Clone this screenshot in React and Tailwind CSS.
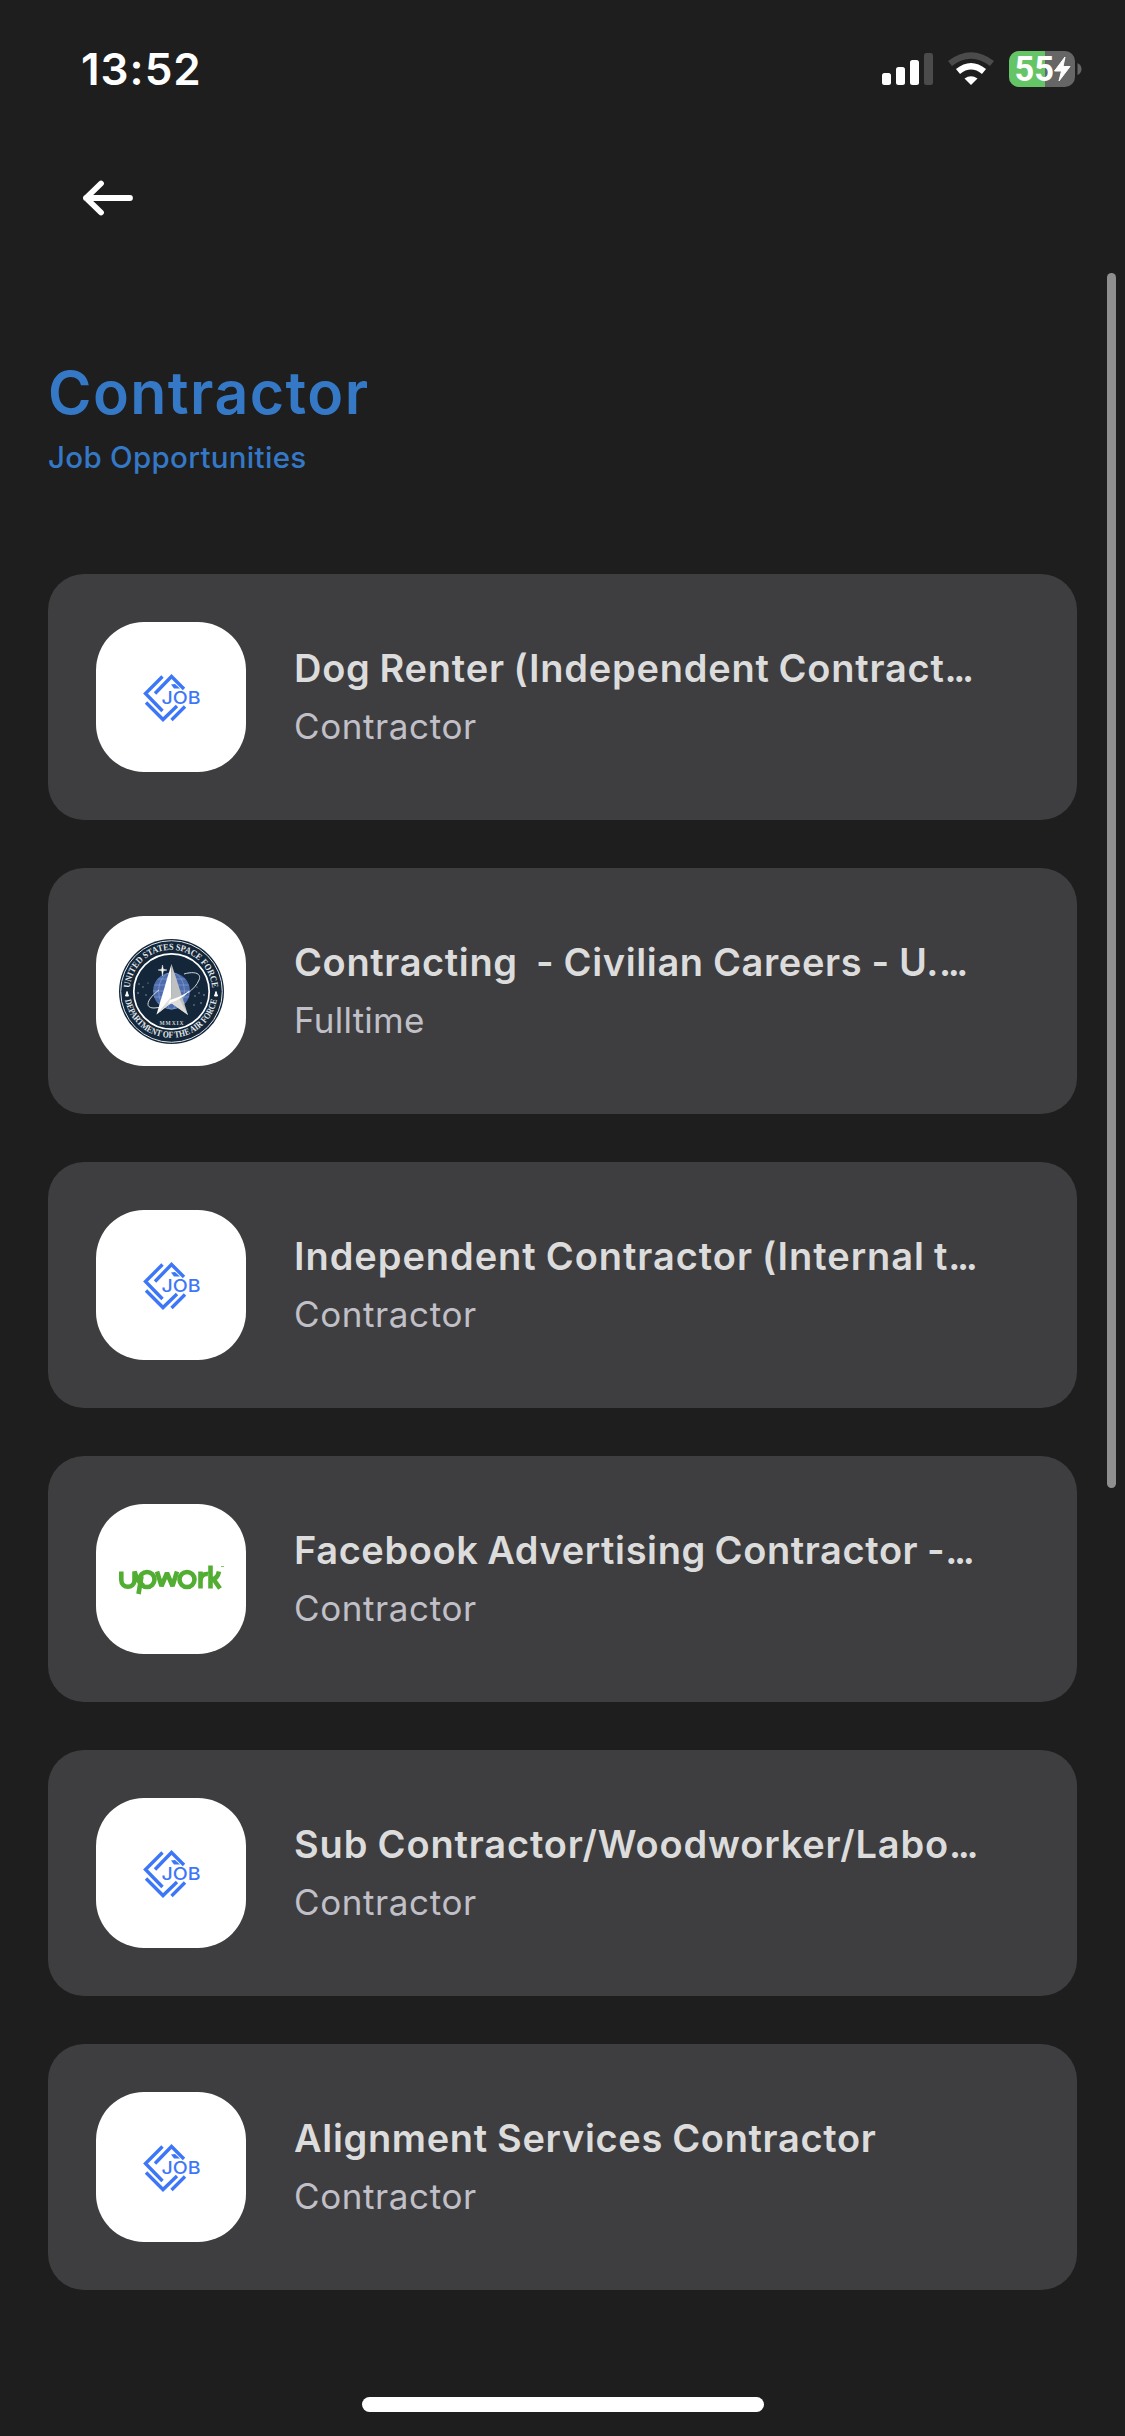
const jobs = [
  { title: "Dog Renter (Independent Contract", cut: true, type: "Contractor", logo: "job", fit: "tracking-[0.77px] [word-spacing:-1.5px]" },
  { title: "Contracting  - Civilian Careers - U.", cut: true, type: "Fulltime", logo: "space", fit: "tracking-[0.62px] [word-spacing:-1px]" },
  { title: "Independent Contractor (Internal t", cut: true, type: "Contractor", logo: "job", fit: "tracking-[0.95px] [word-spacing:-1.5px]" },
  { title: "Facebook Advertising Contractor -", cut: true, type: "Contractor", logo: "upwork", fit: "tracking-[0.6px] [word-spacing:-1.5px]" },
  { title: "Sub Contractor/Woodworker/Labo", cut: true, type: "Contractor", logo: "job", fit: "tracking-[0.83px] [word-spacing:-1px]" },
  { title: "Alignment Services Contractor", cut: false, type: "Contractor", logo: "job", fit: "tracking-[0.66px] [word-spacing:-1px]" },
];

function JobLogo() {
  return (
    <svg viewBox="0 0 150 150" className="size-full" fill="none" stroke="#3d77f8" strokeWidth="3.4">
      <path d="M66.5 54.5 49.5 71.5 66.5 89" />
      <path d="M59 71.5 75.5 54.5 88 67" />
      <path d="M50 80.5 67 97.5 81 84" />
      <path d="M75.500 98 89 84.500" />
      <path d="M75 62.500 79 62 84 66.500H78z" fill="#3d77f8" stroke="none" />
      <text x="65.500" y="82" fontFamily="Inter" fontSize="17.300" fontWeight="500" textLength="39" lengthAdjust="spacingAndGlyphs" fill="#3d77f8" stroke="none">JOB</text>
    </svg>
  );
}

function SpaceLogo() {
  return (
    <svg viewBox="0 0 150 150" className="size-full">
      <defs>
        <path id="sealTop" d="M33.800 75a41.200 41.200 0 0 1 82.400 0" />
        <path id="sealBottom" d="M28.200 75a46.800 46.800 0 0 0 93.600 0" />
        <clipPath id="globe"><circle cx="75.500" cy="75" r="18.500" /></clipPath>
      </defs>
      <circle cx="75.500" cy="75.500" r="52.500" fill="#14273a" />
      <circle cx="75.500" cy="75.500" r="50.800" fill="none" stroke="#dfe3e6" strokeWidth="1" />
      <circle cx="75.500" cy="75.500" r="37.700" fill="none" stroke="#fff" strokeWidth="1.700" />
      <g fill="#e4e7ea" fontFamily="Liberation Serif" fontSize="9.200" fontWeight="700">
        <text><textPath href="#sealTop" startOffset="3" textLength="123" lengthAdjust="spacingAndGlyphs">UNITED STATES SPACE FORCE</textPath></text>
        <text><textPath href="#sealBottom" startOffset="9" textLength="129" lengthAdjust="spacingAndGlyphs">DEPARTMENT OF THE AIR FORCE</textPath></text>
      </g>
      <path d="M31 75.500 32.500 80H29.500zM120 75.500 121.500 80H118.500z" fill="#fff" stroke="#fff" />
      <circle cx="75.500" cy="75" r="18.500" fill="#4d6cad" />
      <g clipPath="url(#globe)" fill="none" stroke="#8fa6d3" strokeWidth=".6">
        <ellipse cx="75.500" cy="75" rx="6" ry="18.500" />
        <ellipse cx="75.500" cy="75" rx="13" ry="18.500" />
        <path d="M57 63h37M57 69h37M57 75h37M57 81h37M57 87h37" />
      </g>
      <path d="M88 58c10-3 18-1 15 6-2 5-6 9-11 13M63 74c-12 9-15 18-5 18 10 0 27-8 35-17" fill="none" stroke="#d3d9e0" strokeWidth="1" />
      <path d="M75.500 48 60.500 98.500 75 87z" fill="#fff" />
      <path d="M75.500 48 92 99 75 87z" fill="#bfc1c0" />
      <path d="M60.500 98.500 75 81v6z" fill="#dcdcd9" />
      <path d="M75 87 92 99 83 82z" fill="#dcdcd9" />
      <path d="M72 88c8-3 16-7 21-13-5 4-12 7-19 9z" fill="#fff" />
      <path d="M66.500 49 67.300 53.200 71 54 67.300 54.800 66.500 60 65.700 54.800 62 54 65.700 53.200z" fill="#fff" stroke="#fff" strokeWidth=".4" />
      <g fill="#9aabba">
        <circle cx="43" cy="68" r=".7" /><circle cx="47" cy="71" r=".7" /><circle cx="42" cy="77" r=".8" /><circle cx="50" cy="79" r=".7" /><circle cx="52" cy="67" r=".6" />
        <circle cx="99" cy="80" r=".7" /><circle cx="103" cy="77" r=".7" /><circle cx="108" cy="79" r=".8" /><circle cx="105" cy="87" r=".8" /><circle cx="98" cy="89" r=".7" /><circle cx="101" cy="71" r=".6" />
      </g>
      <text x="63.500" y="109.300" fontFamily="Liberation Serif" fontSize="5.500" fontWeight="700" textLength="24" fill="#c9ced3">MMXIX</text>
    </svg>
  );
}

function UpworkLogo() {
  return (
    <svg viewBox="0 0 150 150" className="size-full" fill="none" stroke="#52ae32" strokeWidth="4.600">
      <path d="M25.300 67.500v8.500c0 9 13.200 9 13.200 0v-8.500c2 7 5 12 9 14" />
      <circle cx="51" cy="75.500" r="7.500" />
      <path d="M45.500 72 42.500 90" />
      <path d="M61 67.500 65.500 82 71 69 76.500 82 81 67.500" strokeLinejoin="bevel" />
      <circle cx="91" cy="75.500" r="7.500" />
      <path d="M104.500 84.500V67.500M104.500 77c0-5 3-7.500 7.500-7M114.500 61.500v23M115 75.500c4 0 7-3 8-8M117 74.500 124 84.500" />
      <path d="M125 62.500h3" strokeWidth="1.200" opacity=".7" />
    </svg>
  );
}

const logos = { job: JobLogo, space: SpaceLogo, upwork: UpworkLogo };

function StatusBar() {
  return (
    <header className="flex h-[138px] items-start justify-between pl-[81px] pr-[42px] pt-[40px] text-white">
      <div className="text-[44px] leading-[58px] font-semibold tracking-[1px]">13:52</div>
      <svg width="204" height="40" viewBox="0 0 204 40" className="mt-[9px]">
        <g fill="#fff">
          <rect x="3" y="24" width="9" height="12" rx="2.500" />
          <rect x="17" y="18" width="9" height="18" rx="2.500" />
          <rect x="31" y="11" width="9" height="25" rx="2.500" />
          <rect x="45" y="4" width="9" height="32" rx="2.500" fill="#4b4b4b" />
          <path d="M92 36 85.500 29.500q6.500-4.500 13 0z" />
        </g>
        <path d="M71 14.500q21-16 42 0" fill="none" stroke="#4b4b4b" strokeWidth="6.500" />
        <path d="M79 22.500q13-10.500 26 0" fill="none" stroke="#fff" strokeWidth="6.500" />
        <rect x="130" y="2" width="66" height="36" rx="10" fill="#666" />
        <path d="M140 2h26v36h-26a10 10 0 0 1-10-10V12a10 10 0 0 1 10-10" fill="#65c466" />
        <path d="M198.500 14q4 2 4 6t-4 6z" fill="#666" />
        <text x="135.500" y="32" fontFamily="Roboto" fontWeight="700" fontSize="34.500" textLength="39.500" lengthAdjust="spacingAndGlyphs" fill="#fff">55</text>
        <path d="M186 8 175.500 22h7L180 32 191 17.500h-7z" fill="#fff" stroke="#fff" strokeWidth="1" strokeLinejoin="round" />
      </svg>
    </header>
  );
}

export default function App() {
  return (
    <div className="relative h-[2436px] w-[1125px] overflow-hidden bg-[#1e1e1e] font-['Inter',sans-serif]">
      <StatusBar />
      <nav className="flex h-[120px] items-center pl-[81px]">
        <svg width="56" height="40" viewBox="0 0 56 40" fill="none" stroke="#fff" strokeWidth="5.800" strokeLinecap="round" strokeLinejoin="round">
          <path d="M49 20H5M20 5.500 5 20 20 34.500" />
        </svg>
      </nav>
      <main className="px-[48px]">
        <div className="h-[316px] pt-[97px] text-[#3478c6]">
          <h1 className="text-[59px] leading-[76px] font-semibold tracking-[1.45px]">Contractor</h1>
          <p className="mt-[6px] text-[29.5px] leading-[40px] font-medium tracking-[0.3px]">Job Opportunities</p>
        </div>
        <div className="flex flex-col gap-[48px]">
          {jobs.map((job) => {
            const Logo = logos[job.logo];
            return (
              <article key={job.title} className="flex gap-[48px] rounded-[36px] bg-[#3e3e40] p-[48px]">
                <div className="size-[150px] shrink-0 overflow-hidden rounded-[48px] bg-white">
                  <Logo />
                </div>
                <div className="pt-[20px] whitespace-pre">
                  <h2 className="text-[38px] leading-[52px] font-semibold text-[#dcdcdc]">
                    <span className={job.fit}>{job.title}</span>
                    {job.cut && <span className="tracking-[-3.4px]">...</span>}
                  </h2>
                  <p className={job.type === "Fulltime" ? "mt-[8px] text-[35px] leading-[48px] tracking-[0.25px] text-[#c1c0c8]" : "mt-[8px] text-[35px] leading-[48px] tracking-[0.6px] text-[#c1c0c8]"}>{job.type}</p>
                </div>
              </article>
            );
          })}
        </div>
      </main>
      <div className="absolute top-[273px] right-[9px] h-[1215px] w-[9px] rounded-full bg-[#8f8f8f]" />
      <div className="absolute top-[2397px] left-[362px] h-[15px] w-[402px] rounded-full bg-white" />
    </div>
  );
}
